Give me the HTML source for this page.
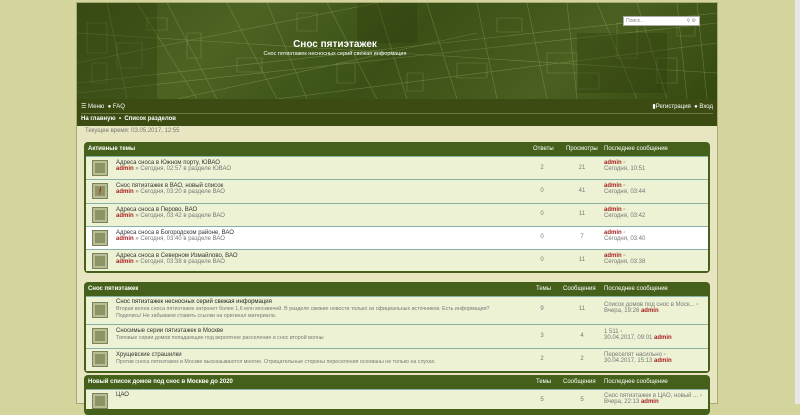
<!DOCTYPE html>
<html><head><meta charset="utf-8"><style>
*{margin:0;padding:0;box-sizing:border-box}
body{width:800px;height:404px;overflow:hidden;background:#d3d59d;font-family:"Liberation Sans",sans-serif;position:relative}
.a{position:absolute}
#wrap{left:76px;top:2px;width:642px;height:402px;background:#e8e6c0;border:1px solid #a8aa78}
#hdr{left:77px;top:3px;width:640px;height:96px;background:linear-gradient(135deg,#3e5419 0%,#4c6322 25%,#3a5016 50%,#4a6020 75%,#34480f 100%);overflow:hidden}
#nav{left:77px;top:99px;width:640px;height:27px;background:#3b4b12}
.t{font-size:6px;color:#333;white-space:nowrap}
.w{color:#fff;font-size:6px;white-space:nowrap}
.panel{background:#44601a;border-radius:4px}
.row{background:#eef2d4;border-top:1px solid #8ab0a8}
.ic{width:14px;height:14px;background:#8c9466;border:2px solid #b8bd98;outline:1px solid #7a8258}
.adm{color:#a82020;font-weight:bold}
.g{color:#777}
.hd{color:#fff;font-size:6px;font-weight:bold;white-space:nowrap}
.n{font-size:6px;color:#777;text-align:center;width:30px}
</style></head><body>
<div class="a" style="left:795px;top:0;width:5px;height:404px;background:#e8e8e8"></div>
<div id="wrap" class="a"></div>
<div id="hdr" class="a">
<svg width="640" height="96" style="position:absolute;left:0;top:0" fill="none">
<g stroke="#b8cc88" stroke-opacity=".35" stroke-width=".6">
<path d="M0 80 L640 10 M0 60 L300 0 M100 96 L400 30 M200 96 L640 40 M0 90 L640 20 M60 0 L120 96 M150 0 L200 96 M250 0 L300 96 M350 0 L380 96 M450 0 L470 96 M520 0 L560 96 M600 0 L610 96 M0 30 L640 70 M30 0 L50 96 M90 0 L140 96 M190 0 L230 96 M300 0 L330 96 M400 0 L420 96 M490 0 L500 96 M560 0 L590 96 M620 0 L630 96"/>
<path d="M10 20 h20 v30 h-20z M40 40 h25 v25 h-25z M470 50 h30 v20 h-30z M540 20 h20 v35 h-20z M380 60 h30 v15 h-30z M15 60 h15 v20 h-15z M70 15 h20 v12 h-20z M110 30 h14 v25 h-14z M160 55 h25 v14 h-25z M220 10 h20 v18 h-20z M260 60 h18 v20 h-18z M420 15 h25 v14 h-25z M500 70 h22 v16 h-22z M580 55 h20 v25 h-20z M600 15 h18 v18 h-18z M330 70 h16 v18 h-16z"/>
</g>
<g fill="#2a3a0c" opacity=".35"><rect x="0" y="0" width="80" height="96"/><rect x="280" y="0" width="60" height="40"/><rect x="500" y="30" width="90" height="60"/></g>
</svg>
<div class="a" style="left:0;width:640px;top:36px;text-align:center;color:#fff;font-weight:bold;font-size:10px;padding-right:124px">Снос пятиэтажек</div>
<div class="a" style="left:0;width:640px;top:48px;text-align:center;color:#fff;font-size:5.5px;padding-right:124px">Снос пятиэтажек несносных серий свежая информация</div>
<div class="a" style="left:546px;top:13px;width:77px;height:10px;background:#fff;border:1px solid #aaa;font-size:5px;color:#888;padding:1px 2px">Поиск…<span style="position:absolute;right:3px;color:#888">⚲ ⚙</span></div>
</div>
<div id="nav" class="a">
<div class="a w" style="left:4px;top:4px">☰ Меню &nbsp;● FAQ</div>
<div class="a w" style="right:4px;top:4px">▮Регистрация &nbsp;● Вход</div>
<div class="a" style="left:4px;top:14px;width:632px;height:1px;background:#6a7a40"></div>
<div class="a w" style="left:4px;top:17px;font-weight:bold">На главную &nbsp;•&nbsp; Список разделов</div>
</div>
<div class="a t" style="left:85px;top:128px;color:#777">Текущее время: 03.05.2017, 12:55</div>

<div class="a panel" style="left:84px;top:142px;width:626px;height:131px"></div>
<div class="a hd" style="left:88px;top:146px">Активные темы</div>
<div class="a hd" style="left:533px;top:146px;font-weight:normal">Ответы</div>
<div class="a hd" style="left:566px;top:146px;font-weight:normal">Просмотры</div>
<div class="a hd" style="left:604px;top:146px;font-weight:normal">Последнее сообщение</div>

<div class="a row" style="left:86px;top:156px;width:622px;height:23px"></div>
<div class="a row" style="left:86px;top:179px;width:622px;height:24px"></div>
<div class="a row" style="left:86px;top:203px;width:622px;height:23px"></div>
<div class="a row" style="left:86px;top:226px;width:622px;height:23px;background:#fff"></div>
<div class="a row" style="left:86px;top:249px;width:622px;height:22px"></div>

<div class="a ic" style="left:93px;top:161px"></div>
<div class="a ic" style="left:93px;top:184px;color:#b02020;font-size:9px;font-weight:bold;font-style:italic;text-align:center;line-height:10px">!</div>
<div class="a ic" style="left:93px;top:208px"></div>
<div class="a ic" style="left:93px;top:231px"></div>
<div class="a ic" style="left:93px;top:254px"></div>

<div class="a t" style="left:116px;top:160px">Адреса сноса в Южном порту, ЮВАО<br><span class="adm">admin</span> <span class="g">» Сегодня, 02:57 в разделе ЮВАО</span></div>
<div class="a t" style="left:116px;top:183px">Снос пятиэтажек в ВАО, новый список<br><span class="adm">admin</span> <span class="g">» Сегодня, 03:20 в разделе ВАО</span></div>
<div class="a t" style="left:116px;top:207px">Адреса сноса в Перово, ВАО<br><span class="adm">admin</span> <span class="g">» Сегодня, 03:42 в разделе ВАО</span></div>
<div class="a t" style="left:116px;top:230px">Адреса сноса в Богородском районе, ВАО<br><span class="adm">admin</span> <span class="g">» Сегодня, 03:40 в разделе ВАО</span></div>
<div class="a t" style="left:116px;top:253px">Адреса сноса в Северном Измайлово, ВАО<br><span class="adm">admin</span> <span class="g">» Сегодня, 03:38 в разделе ВАО</span></div>

<div class="a n" style="left:527px;top:165px">2</div><div class="a n" style="left:567px;top:165px">21</div>
<div class="a n" style="left:527px;top:188px">0</div><div class="a n" style="left:567px;top:188px">41</div>
<div class="a n" style="left:527px;top:211px">0</div><div class="a n" style="left:567px;top:211px">11</div>
<div class="a n" style="left:527px;top:234px">0</div><div class="a n" style="left:567px;top:234px">7</div>
<div class="a n" style="left:527px;top:257px">0</div><div class="a n" style="left:567px;top:257px">11</div>

<div class="a t" style="left:604px;top:160px"><span class="adm">admin</span> <span class="g">▫</span><br><span class="g">Сегодня, 10:51</span></div>
<div class="a t" style="left:604px;top:183px"><span class="adm">admin</span> <span class="g">▫</span><br><span class="g">Сегодня, 03:44</span></div>
<div class="a t" style="left:604px;top:207px"><span class="adm">admin</span> <span class="g">▫</span><br><span class="g">Сегодня, 03:42</span></div>
<div class="a t" style="left:604px;top:230px"><span class="adm">admin</span> <span class="g">▫</span><br><span class="g">Сегодня, 03:40</span></div>
<div class="a t" style="left:604px;top:253px"><span class="adm">admin</span> <span class="g">▫</span><br><span class="g">Сегодня, 03:38</span></div>

<div class="a panel" style="left:84px;top:282px;width:626px;height:91px"></div>
<div class="a hd" style="left:88px;top:286px">Снос пятиэтажек</div>
<div class="a hd" style="left:536px;top:286px;font-weight:normal">Темы</div>
<div class="a hd" style="left:563px;top:286px;font-weight:normal">Сообщения</div>
<div class="a hd" style="left:604px;top:286px;font-weight:normal">Последнее сообщение</div>
<div class="a row" style="left:86px;top:296px;width:622px;height:28px"></div>
<div class="a row" style="left:86px;top:324px;width:622px;height:24px"></div>
<div class="a row" style="left:86px;top:348px;width:622px;height:23px"></div>
<div class="a ic" style="left:93px;top:303px"></div>
<div class="a ic" style="left:93px;top:329px"></div>
<div class="a ic" style="left:93px;top:352px"></div>
<div class="a t" style="left:116px;top:299px;line-height:7px"><b style="font-weight:normal;color:#222">Снос пятиэтажек несносных серий свежая информация</b><br><span class="g" style="font-size:5.3px">Вторая волна сноса пятиэтажек затронет более 1,6 млн москвичей. В разделе свежие новости только из официальных источников. Есть информация?<br>Поделись! Не забываем ставить ссылки на оригинал материала.</span></div>
<div class="a t" style="left:116px;top:328px;line-height:7px">Сносимые серии пятиэтажек в Москве<br><span class="g" style="font-size:5.3px">Типовые серии домов попадающие под вероятное расселение и снос второй волны</span></div>
<div class="a t" style="left:116px;top:352px;line-height:7px">Хрущевские страшилки<br><span class="g" style="font-size:5.3px">Против сноса пятиэтажек в Москве высказываются многие. Отрицательные стороны переселения основаны не только на слухах.</span></div>
<div class="a n" style="left:527px;top:306px">9</div><div class="a n" style="left:567px;top:306px">11</div>
<div class="a n" style="left:527px;top:333px">3</div><div class="a n" style="left:567px;top:333px">4</div>
<div class="a n" style="left:527px;top:356px">2</div><div class="a n" style="left:567px;top:356px">2</div>
<div class="a t g" style="left:604px;top:302px">Список домов под снос в Моск... ▫<br>Вчера, 19:26 <span class="adm">admin</span></div>
<div class="a t g" style="left:604px;top:329px">1 511 ▫<br>30.04.2017, 09:01 <span class="adm">admin</span></div>
<div class="a t g" style="left:604px;top:352px">Переселят насильно ▫<br>30.04.2017, 15:13 <span class="adm">admin</span></div>

<div class="a panel" style="left:84px;top:375px;width:626px;height:40px"></div>
<div class="a hd" style="left:88px;top:379px">Новый список домов под снос в Москве до 2020</div>
<div class="a hd" style="left:536px;top:379px;font-weight:normal">Темы</div>
<div class="a hd" style="left:563px;top:379px;font-weight:normal">Сообщения</div>
<div class="a hd" style="left:604px;top:379px;font-weight:normal">Последнее сообщение</div>
<div class="a row" style="left:86px;top:389px;width:622px;height:20px"></div>
<div class="a ic" style="left:93px;top:394px"></div>
<div class="a t" style="left:116px;top:392px">ЦАО</div>
<div class="a n" style="left:527px;top:397px">5</div><div class="a n" style="left:567px;top:397px">5</div>
<div class="a t g" style="left:604px;top:393px">Снос пятиэтажек в ЦАО, новый ... ▫<br>Вчера, 22:13 <span class="adm">admin</span></div>
</body></html>
